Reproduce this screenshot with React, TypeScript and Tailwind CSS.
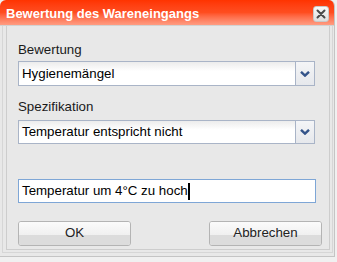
import React from "react";

const font = { fontFamily: '"Liberation Sans", Arial, sans-serif' };

function Chevron() {
  return (
    <svg width="10" height="6" viewBox="0 0 10 6">
      <path d="M1 0.8 L5 4.6 L9 0.8" fill="none" stroke="#34548a" strokeWidth="2.4" strokeLinejoin="miter" />
    </svg>
  );
}

function Select({ value, h }: { value: string; h: string }) {
  return (
    <div className={`flex w-[297px] ${h} border border-[#a9b4c7] bg-gradient-to-b from-[#ececec] via-white via-40% to-white`}>
      <div className="flex-1 flex items-center pl-[3px] text-[13.3px] text-black">{value}</div>
      <div className="w-[19px] border-l border-[#a9b4c7] bg-gradient-to-b from-[#f4f5f7] to-[#e6e8ec] flex items-center justify-center">
        <Chevron />
      </div>
    </div>
  );
}

function Button({ label }: { label: string }) {
  return (
    <div className="w-[113px] h-[25px] rounded-[3px] border border-[#b4b4b4] overflow-hidden flex flex-col relative shadow-[inset_0_0_0_1px_#fafafa]">
      <div className="h-[13px] bg-gradient-to-b from-[#fbfbfb] to-[#f0f0f0]" />
      <div className="flex-1 bg-[#dcdcdc]" />
      <div className="absolute inset-0 flex items-center justify-center pb-[2px] text-[13.3px] text-[#222]">{label}</div>
    </div>
  );
}

export default function App() {
  return (
    <div className="w-[337px] h-[262px] bg-[#f0f0f0] overflow-hidden" style={font}>
      <div className="w-[335px] h-[257px] rounded-t-[6px] overflow-hidden flex flex-col bg-[#e8e8e8] border-b border-r border-[#c4c4c4]">
        <div className="h-[26px] shrink-0 flex items-center justify-between pl-[6px] pr-[5px] bg-gradient-to-b from-[#ff3300] via-[#ff4d1f] via-50% to-[#ff9c82] border-b border-[#d2d2d2]">
          <span className="text-white font-bold text-[13px] leading-[15px] pt-[1px]">Bewertung des Wareneingangs</span>
          <div className="w-[16px] h-[16px] mt-[2px] rounded-[3px] border border-[#c9c9c9] bg-gradient-to-b from-[#fafafa] to-[#dedede] flex items-center justify-center">
            <svg width="10" height="10" viewBox="0 0 10 10">
              <path d="M1.5 1.5 L8.5 8.5 M8.5 1.5 L1.5 8.5" stroke="#4a4a4a" strokeWidth="2" strokeLinecap="round" />
            </svg>
          </div>
        </div>
        <div className="flex-1 flex pl-[2px] pr-[1px] pb-[3px]">
          <div className="flex-1 flex border-l border-r border-b border-[#d6d6d6] pl-[3px] pr-[2px] pb-[2px]">
            <div className="flex-1 border-l border-r border-b border-[#cdcdcd] pl-[11px] pt-[16px] flex flex-col">
              <div className="text-[13.3px] leading-[16px] text-[#1a1a1a]">Bewertung</div>
              <div className="mt-[3px]">
                <Select value="Hygienemängel" h="h-[25px]" />
              </div>
              <div className="mt-[13px] text-[13.3px] leading-[16px] text-[#1a1a1a]">Spezifikation</div>
              <div className="mt-[5px]">
                <Select value="Temperatur entspricht nicht" h="h-[24px]" />
              </div>
              <div className="mt-[35px] w-[298px] h-[24px] border border-[#7ea6d6] bg-white flex items-center pl-[3px] text-[13.3px] text-black">
                <span>Temperatur um 4°C zu hoch</span>
                <span className="inline-block w-[2px] h-[17px] bg-black" />
              </div>
              <div className="mt-[18px] flex w-[304px] justify-between">
                <Button label="OK" />
                <Button label="Abbrechen" />
              </div>
            </div>
          </div>
        </div>
      </div>
    </div>
  );
}
